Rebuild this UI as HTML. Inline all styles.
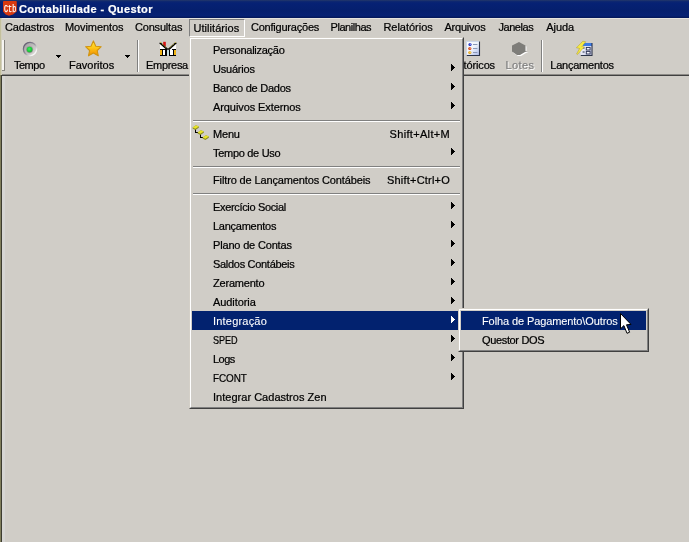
<!DOCTYPE html>
<html lang="pt-BR">
<head>
<meta charset="utf-8">
<title>Contabilidade - Questor</title>
<style>
html,body{margin:0;padding:0;}
body{width:689px;height:542px;overflow:hidden;background:#d0cdc7;font-family:"Liberation Sans",sans-serif;font-size:11px;color:#000;position:relative;cursor:default;-webkit-text-stroke:0.22px currentColor;}
.abs{position:absolute;}
#win{position:absolute;left:0;top:0;width:689px;height:542px;overflow:hidden;background:#d0cdc7;will-change:transform;}
/* title bar */
#title{position:absolute;left:0;top:0;width:689px;height:18px;background:linear-gradient(#2a3c68 0,#10296f 1px,#062174 3px,#051f6e 10px,#062174 16px,#041a60 17px,#04185a 18px);}
#title .cap{position:absolute;left:19px;top:2px;height:14px;line-height:14px;color:#fff;font-weight:bold;font-size:11px;letter-spacing:0.4px;white-space:nowrap;}
/* menubar */
#menubar{position:absolute;left:0;top:18px;width:689px;height:19px;background:#d0cdc7;}
#menubar span{position:absolute;top:2px;height:15px;line-height:15px;white-space:nowrap;}
#mb-sel{position:absolute;left:189px;top:1px;width:54px;height:16px;border:1px solid;border-color:#808080 #fff #fff #808080;}
/* toolbar */
#toolbar{position:absolute;left:0;top:37px;width:689px;height:37px;background:#d0cdc7;}
.tlabel{position:absolute;top:21px;height:14px;line-height:14px;white-space:nowrap;}
.vsep{position:absolute;top:3px;width:1px;height:32px;background:#808080;border-right:1px solid #fff;}
.darr{position:absolute;width:5px;height:3px;background:
 linear-gradient(#000,#000) 0 0/5px 1px no-repeat,
 linear-gradient(#000,#000) 1px 1px/3px 1px no-repeat,
 linear-gradient(#000,#000) 2px 2px/1px 1px no-repeat;}
/* client */
#client{position:absolute;left:0;top:74px;width:689px;height:468px;background:#d0cdc7;}
/* popup menus */
.menu{position:absolute;background:#d0cdc7;box-sizing:border-box;border:1px solid;border-color:#d4d0c8 #404040 #404040 #d4d0c8;}
.menu .in{position:absolute;left:0;top:0;right:0;bottom:0;border:1px solid;border-color:#fff #808080 #808080 #fff;}
.mi{position:absolute;left:2px;right:2px;height:19px;line-height:19px;white-space:nowrap;}
.mi .t{position:absolute;left:21px;top:1px;}
.mi .k{position:absolute;right:11px;top:1px;}
.mi .a{position:absolute;right:6px;top:5px;width:4px;height:7px;background:
 linear-gradient(currentColor,currentColor) 0 0/1px 7px no-repeat,
 linear-gradient(currentColor,currentColor) 1px 1px/1px 5px no-repeat,
 linear-gradient(currentColor,currentColor) 2px 2px/1px 3px no-repeat,
 linear-gradient(currentColor,currentColor) 3px 3px/1px 1px no-repeat;}
.mi.sel{background:#02226f;color:#fff;-webkit-text-stroke:0.08px #fff;}
.ms{position:absolute;left:3px;right:3px;height:1px;background:#808080;border-bottom:1px solid #fff;}
</style>
</head>
<body>
<div id="win">
  <div id="title">
    <svg class="abs" style="left:3px;top:1px" width="14" height="15" viewBox="0 0 14 15">
      <path d="M0 0.6 L1 0 H13 L13.8 0.6 V10.6 L10 13.6 L6 14.8 L2.6 13.6 L0 10.6 Z" fill="#d8380f"/>
      <text x="1" y="11.2" font-family="Liberation Mono, monospace" font-size="10.5" fill="#fff" stroke="#fff" stroke-width="0.25" textLength="12.2" lengthAdjust="spacingAndGlyphs">Ctb</text>
    </svg>
    <div class="cap">Contabilidade - Questor</div>
  </div>

  <div id="menubar">
    <div class="abs" style="left:0;top:0;width:689px;height:1px;background:#e6e4de"></div>
    <div id="mb-sel"></div>
    <span style="left:5px;letter-spacing:-0.11px">Cadastros</span>
    <span style="left:65px;letter-spacing:-0.1px">Movimentos</span>
    <span style="left:135px;letter-spacing:-0.19px">Consultas</span>
    <span style="left:193.5px;top:3px;letter-spacing:0.05px">Utilitários</span>
    <span style="left:251px;letter-spacing:-0.22px">Configurações</span>
    <span style="left:330.5px;letter-spacing:-0.44px">Planilhas</span>
    <span style="left:383.4px;letter-spacing:-0.02px">Relatórios</span>
    <span style="left:444.4px;letter-spacing:-0.2px">Arquivos</span>
    <span style="left:498.4px;letter-spacing:-0.43px">Janelas</span>
    <span style="left:546.3px;letter-spacing:-0.07px">Ajuda</span>
  </div>

  <div id="toolbar">
    <div class="abs" style="left:2px;top:3px;width:2px;height:30px;background:#f6f5f2;border-right:1px solid #86847e;border-bottom:1px solid #86847e;"></div>
    <div class="tlabel" style="left:14px;letter-spacing:-0.5px">Tempo</div>
    <div class="darr" style="left:56px;top:18px"></div>
    <div class="tlabel" style="left:69px;letter-spacing:0px">Favoritos</div>
    <div class="darr" style="left:125px;top:18px"></div>
    <div class="vsep" style="left:137px"></div>
    <div class="tlabel" style="left:146px;letter-spacing:-0.3px">Empresa</div>
    <div class="tlabel" style="left:448px;letter-spacing:-0.13px">Históricos</div>
    <div class="tlabel" style="left:505.5px;letter-spacing:0.38px;color:#808080;text-shadow:1px 1px 0 #fff">Lotes</div>
    <div class="vsep" style="left:541px"></div>
    <div class="tlabel" style="left:550.3px;letter-spacing:-0.23px">Lançamentos</div>

    <!-- toolbar icons (page coords, shifted by -37) -->
    <svg class="abs" style="left:0;top:0" width="689" height="37" viewBox="0 37 689 37">
      <defs>
        <linearGradient id="gRing" x1="0" y1="0" x2="1" y2="1"><stop offset="0" stop-color="#4e4860"/><stop offset="0.5" stop-color="#9a96a0"/><stop offset="0.8" stop-color="#f4f4f4"/><stop offset="1" stop-color="#ffffff"/></linearGradient>
        <linearGradient id="gDisc" x1="0" y1="0" x2="1" y2="1"><stop offset="0" stop-color="#9c9a9e"/><stop offset="0.6" stop-color="#c8c6c4"/><stop offset="1" stop-color="#e4e2de"/></linearGradient>
        <radialGradient id="gLed" cx="0.45" cy="0.4" r="0.6"><stop offset="0" stop-color="#40f060"/><stop offset="0.7" stop-color="#18c838"/><stop offset="1" stop-color="#409048"/></radialGradient>
        <linearGradient id="gStar" x1="0" y1="0" x2="0" y2="1"><stop offset="0" stop-color="#ffe840"/><stop offset="0.45" stop-color="#ffc818"/><stop offset="1" stop-color="#f08c00"/></linearGradient>
        <linearGradient id="gPage" x1="0" y1="0" x2="1" y2="1"><stop offset="0" stop-color="#ffffff"/><stop offset="0.5" stop-color="#eef2fc"/><stop offset="1" stop-color="#a8b8e8"/></linearGradient>
        <linearGradient id="gForm" x1="0" y1="0" x2="1" y2="1"><stop offset="0" stop-color="#ffffff"/><stop offset="1" stop-color="#c8cce8"/></linearGradient>
      </defs>
      <!-- Tempo -->
      <circle cx="30" cy="49" r="6.6" fill="url(#gDisc)" stroke="url(#gRing)" stroke-width="1.3"/>
      <circle cx="29.6" cy="49.6" r="3.6" fill="#8a8a8a" opacity="0.55"/><circle cx="29.6" cy="49.6" r="2.9" fill="url(#gLed)"/>
      <!-- Favoritos star -->
      <path d="M93.4 40.9 L95.8 46.2 L101.2 46.7 L97.2 50.5 L98.3 55.8 L93.4 53.1 L88.5 55.8 L89.6 50.5 L85.6 46.7 L91 46.2 Z" fill="url(#gStar)" stroke="#d09410" stroke-width="1.1" stroke-linejoin="round"/>
      <!-- Empresa (two houses) -->
      <path d="M160 44 L166.5 49.6 V55.5 H160 Z M176 44 L169.5 49.6 V55.5 H176 Z" fill="#fff"/>
      <rect x="163.2" y="41.8" width="2.6" height="5" fill="#d81414"/>
      <g shape-rendering="crispEdges">
        <rect x="167" y="50" width="2" height="5" fill="#c4dce0"/>
        <rect x="160" y="50" width="2" height="5" fill="#f0b414"/>
        <rect x="174" y="50" width="2" height="5" fill="#f0b414"/>
        <rect x="160" y="49" width="6" height="1" fill="#000"/>
        <rect x="172" y="49" width="4" height="1" fill="#000"/>
        <rect x="162" y="50" width="1" height="5" fill="#000"/>
        <rect x="173" y="50" width="1" height="5" fill="#000"/>
        <rect x="165" y="49" width="2" height="6" fill="#000"/>
        <rect x="169" y="50" width="1" height="5" fill="#000"/>
        <rect x="160" y="55" width="7" height="1" fill="#000"/>
        <rect x="169" y="55" width="7" height="1" fill="#000"/>
      </g>
      <path d="M159.8 42.6 L167.6 49.6 M176.2 42.6 L168.4 49.6" stroke="#000" stroke-width="1.9" fill="none"/>
      <path d="M160 42 L166.6 48 M176 42 L169.4 48" stroke="#e8d848" stroke-width="0.9" stroke-dasharray="1.3 1.1" fill="none"/>
      <!-- Históricos -->
      <rect x="466.5" y="41.5" width="13" height="14" fill="url(#gPage)"/>
      <path d="M479.5 41.5 V55.5 H466.8" stroke="#2c3448" stroke-width="1.1" fill="none"/>
      <path d="M466.5 55 V41.5 H479" stroke="#c8d4ec" stroke-width="0.8" fill="none"/>
      <circle cx="470" cy="44.5" r="1.6" fill="#2030c0"/><circle cx="470.3" cy="44.2" r="0.6" fill="#c0c8ff"/>
      <circle cx="469.8" cy="48.5" r="1.6" fill="#d84818"/><circle cx="470.1" cy="48.2" r="0.6" fill="#ffd0b0"/>
      <circle cx="469.8" cy="52.5" r="1.6" fill="#e8a818"/><circle cx="470.1" cy="52.2" r="0.6" fill="#fff0c0"/>
      <path d="M473 44.5 H477.4 M473 48.5 H477.4 M473 52.5 H477.4" stroke="#8a98b8" stroke-width="1"/>
      <!-- Lotes (disabled) -->
      <path d="M520 43 L526.5 46.5 L526.5 52 L528.5 52.3 L526 53 L521 56 L518 56 L513 52.5 L513 46.5 Z" fill="#fff"/>
      <path d="M519 42 L525.5 45.5 L525.5 51 L527.6 51.3 L525 52 L520 55 L517 55 L512 51.5 L512 45.5 Z" fill="#7e7d79"/>
      <!-- Lançamentos -->
      <rect x="580.5" y="43" width="11.5" height="12.5" fill="url(#gForm)"/>
      <rect x="583" y="43" width="9" height="3" fill="#3c7ae4"/>
      <path d="M592 43 V55.5 H580.8" stroke="#2c3448" stroke-width="1.1" fill="none"/>
      <rect x="586.3" y="47.4" width="3.8" height="2.6" fill="#f4f4fc" stroke="#283050" stroke-width="0.9"/>
      <rect x="586.3" y="51.4" width="3.8" height="2.6" fill="#f4f4fc" stroke="#283050" stroke-width="0.9"/>
      <path d="M582.6 48 H584.6 M582.6 52 H584.6" stroke="#283050" stroke-width="1"/>
      <path d="M582.8 41.2 L585.8 41.8 L581.8 46.4 L584.4 46.8 L577.4 54.6 L576.6 54 L579.6 48.4 L576.4 47.8 Z" fill="#f6ea44" stroke="#a89418" stroke-width="0.45" stroke-linejoin="round"/>
    </svg>
  </div>

  <div id="client">
    <div class="abs" style="left:0;top:0;width:689px;height:1px;background:#8c8a86"></div>
    <div class="abs" style="left:0;top:1px;width:689px;height:1px;background:#404040"></div>
    <div class="abs" style="left:2px;top:2px;width:3px;height:466px;background:#d6d5d3"></div>
    <div class="abs" style="left:1px;top:1px;width:1px;height:467px;background:#3c3c30"></div>
  </div>
  <div class="abs" style="left:0;top:18px;width:1px;height:57px;background:#c4c09c"></div>
  <div class="abs" style="left:1px;top:18px;width:1px;height:57px;background:#d2cfbc"></div>
  <div class="abs" style="left:0;top:75px;width:1px;height:467px;background:#807e5c"></div>

  <!-- main dropdown -->
  <div class="menu" id="m1" style="left:189px;top:37px;width:275px;height:372px;">
    <div class="in"></div>
    <div class="mi" style="top:2px"><span class="t" style="letter-spacing:-0.26px">Personalização</span></div>
    <div class="mi" style="top:21px"><span class="t" style="letter-spacing:-0.21px">Usuários</span><i class="a"></i></div>
    <div class="mi" style="top:40px"><span class="t" style="letter-spacing:-0.25px">Banco de Dados</span><i class="a"></i></div>
    <div class="mi" style="top:59px"><span class="t" style="letter-spacing:-0.09px">Arquivos Externos</span><i class="a"></i></div>
    <div class="ms" style="top:82px"></div>
    <div class="mi" style="top:86px"><span class="t" style="letter-spacing:-0.2px">Menu</span><span class="k" style="letter-spacing:0.32px">Shift+Alt+M</span></div>
    <div class="mi" style="top:105px"><span class="t" style="letter-spacing:-0.3px">Tempo de Uso</span><i class="a"></i></div>
    <div class="ms" style="top:128px"></div>
    <div class="mi" style="top:132px"><span class="t" style="letter-spacing:-0.13px">Filtro de Lançamentos Contábeis</span><span class="k" style="letter-spacing:0.21px">Shift+Ctrl+O</span></div>
    <div class="ms" style="top:155px"></div>
    <div class="mi" style="top:159px"><span class="t" style="letter-spacing:-0.34px">Exercício Social</span><i class="a"></i></div>
    <div class="mi" style="top:178px"><span class="t" style="letter-spacing:-0.26px">Lançamentos</span><i class="a"></i></div>
    <div class="mi" style="top:197px"><span class="t" style="letter-spacing:-0.17px">Plano de Contas</span><i class="a"></i></div>
    <div class="mi" style="top:216px"><span class="t" style="letter-spacing:-0.3px">Saldos Contábeis</span><i class="a"></i></div>
    <div class="mi" style="top:235px"><span class="t" style="letter-spacing:-0.2px">Zeramento</span><i class="a"></i></div>
    <div class="mi" style="top:254px"><span class="t" style="letter-spacing:-0.07px">Auditoria</span><i class="a"></i></div>
    <div class="mi sel" style="top:273px"><span class="t" style="letter-spacing:0.2px">Integração</span><i class="a"></i></div>
    <div class="mi" style="top:292px"><span class="t" style="transform:scaleX(0.83);transform-origin:0 50%;letter-spacing:-0.1px">SPED</span><i class="a"></i></div>
    <div class="mi" style="top:311px"><span class="t" style="letter-spacing:-0.53px">Logs</span><i class="a"></i></div>
    <div class="mi" style="top:330px"><span class="t" style="transform:scaleX(0.90);transform-origin:0 50%;letter-spacing:-0.1px">FCONT</span><i class="a"></i></div>
    <div class="mi" style="top:349px"><span class="t" style="letter-spacing:0.02px">Integrar Cadastros Zen</span></div>
    <!-- Menu item icon -->
    <svg class="abs" style="left:2px;top:86px" width="20" height="19" viewBox="192 124 20 19">
      <path d="M195.5 129 V132.5 H198 M200.5 134 V137.5 H203" stroke="#000" stroke-width="1" fill="none" shape-rendering="crispEdges"/>
      <path d="M192.6 127.4 L196 125.2 L198.8 126.6 L198.8 127.8 L195.4 130 L192.6 128.6 Z" fill="#8c8c20"/>
      <path d="M192.6 127.4 L196 125.2 L198.8 126.6 L195.4 128.8 Z" fill="#e8e428"/>
      <path d="M197.6 132.4 L201 130.2 L203.8 131.6 L203.8 132.8 L200.4 135 L197.6 133.6 Z" fill="#8c8c20"/>
      <path d="M197.6 132.4 L201 130.2 L203.8 131.6 L200.4 133.8 Z" fill="#e8e428"/>
      <path d="M202.6 137.4 L206 135.2 L208.8 136.6 L208.8 137.8 L205.4 140 L202.6 138.6 Z" fill="#8c8c20"/>
      <path d="M202.6 137.4 L206 135.2 L208.8 136.6 L205.4 138.8 Z" fill="#e8e428"/>
    </svg>
  </div>

  <!-- submenu -->
  <div class="menu" id="m2" style="left:458px;top:308px;width:191px;height:44px;">
    <div class="in"></div>
    <div class="mi sel" style="top:2px"><span class="t" style="letter-spacing:-0.1px">Folha de Pagamento\Outros</span></div>
    <div class="mi" style="top:21px"><span class="t" style="letter-spacing:-0.35px">Questor DOS</span></div>
  </div>

  <!-- cursor -->
  <svg class="abs" style="left:620px;top:313px" width="13" height="22" viewBox="0 0 13 22">
    <path d="M0.5 0.5 L0.5 15.8 L3.9 12.6 L7 20.3 L9.6 19.2 L6.5 11.8 L11 11.4 Z" fill="#fff" stroke="#000" stroke-width="1" stroke-linejoin="miter"/>
  </svg>
</div>
</body>
</html>
